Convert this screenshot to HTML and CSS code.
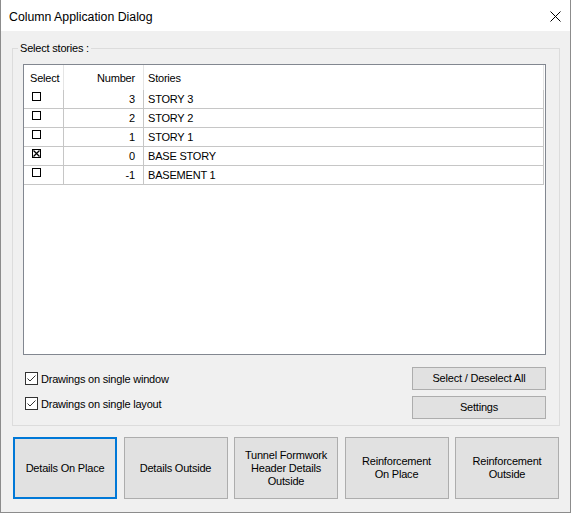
FILE: index.html
```html
<!DOCTYPE html>
<html lang="en">
<head>
    <meta charset="UTF-8">
    <meta name="viewport" content="width=device-width, initial-scale=1.0">
    <title>Column Application Dialog</title>
    <link rel="stylesheet" href="styles.css">
</head>
<body>
    <div class="window">
        <div class="titlebar">
            <span class="title">Column Application Dialog</span>
            <svg class="close" width="11" height="11" viewBox="0 0 11 11">
                <path d="M0.5 0.5 L10.5 10.5 M10.5 0.5 L0.5 10.5" stroke="#000" stroke-width="1" fill="none"/>
            </svg>
        </div>

        <div class="content">
            <fieldset class="group">
                <legend>Select stories :</legend>

                <div class="listbox">
                    <div class="list-head">
                        <div class="col col-select">Select</div>
                        <div class="col col-number">Number</div>
                        <div class="col col-story">Stories</div>
                    </div>
                    <div class="list-row">
                        <div class="col col-select"><span class="mark"></span></div>
                        <div class="col col-number">3</div>
                        <div class="col col-story">STORY 3</div>
                    </div>
                    <div class="list-row">
                        <div class="col col-select"><span class="mark"></span></div>
                        <div class="col col-number">2</div>
                        <div class="col col-story">STORY 2</div>
                    </div>
                    <div class="list-row">
                        <div class="col col-select"><span class="mark"></span></div>
                        <div class="col col-number">1</div>
                        <div class="col col-story">STORY 1</div>
                    </div>
                    <div class="list-row">
                        <div class="col col-select">
                            <span class="mark marked">
                                <svg width="9" height="9" viewBox="0 0 9 9">
                                    <path d="M1.5 1.5 L7.5 7.5 M7.5 1.5 L1.5 7.5" stroke="#000" stroke-width="1.3" fill="none"/>
                                </svg>
                            </span>
                        </div>
                        <div class="col col-number">0</div>
                        <div class="col col-story">BASE STORY</div>
                    </div>
                    <div class="list-row">
                        <div class="col col-select"><span class="mark"></span></div>
                        <div class="col col-number">-1</div>
                        <div class="col col-story">BASEMENT 1</div>
                    </div>
                </div>

                <div class="options">
                    <div class="checks">
                        <label class="check">
                            <span class="box">
                                <svg width="11" height="11" viewBox="0 0 11 11">
                                    <path d="M1.5 5.5 L4 8 L9.5 2.5" stroke="#333" stroke-width="1" fill="none"/>
                                </svg>
                            </span>
                            Drawings on single window
                        </label>
                        <label class="check">
                            <span class="box">
                                <svg width="11" height="11" viewBox="0 0 11 11">
                                    <path d="M1.5 5.5 L4 8 L9.5 2.5" stroke="#333" stroke-width="1" fill="none"/>
                                </svg>
                            </span>
                            Drawings on single layout
                        </label>
                    </div>
                    <div class="side-buttons">
                        <button class="btn">Select / Deselect All</button>
                        <button class="btn">Settings</button>
                    </div>
                </div>
            </fieldset>

            <div class="actions">
                <button class="action default">Details On Place</button>
                <button class="action">Details Outside</button>
                <button class="action">Tunnel Formwork<br>Header Details<br>Outside</button>
                <button class="action">Reinforcement<br>On Place</button>
                <button class="action">Reinforcement<br>Outside</button>
            </div>
        </div>
    </div>
</body>
</html>
```

FILE: styles.css
```css
* {
    margin: 0;
    padding: 0;
    box-sizing: border-box;
}

body {
    font-family: 'Segoe UI', 'Liberation Sans', Arial, sans-serif;
    font-size: 11px;
    letter-spacing: -0.2px;
    color: #000;
    background: #f0f0f0;
}

.window {
    width: 571px;
    height: 513px;
    border: 1px solid #8c8c8c;
    border-top: none;
    background: #f0f0f0;
    display: flex;
    flex-direction: column;
}

.titlebar {
    height: 31px;
    background: #fff;
    display: flex;
    align-items: center;
    justify-content: space-between;
    padding: 2px 9px 0 8px;
}

.title {
    font-size: 12.3px;
    letter-spacing: 0;
}

.close {
    display: block;
}

.content {
    flex: 1;
    padding: 9px 0 0 11px;
}

/* group box */
.group {
    width: 548px;
    border: 1px solid #dcdcdc;
    padding: 0 13px 6px 10px;
}

.group legend {
    line-height: 16px;
    padding: 0 2px;
    margin-left: -5px;
}

.listbox {
    margin-top: 8px;
    height: 291px;
    border: 1px solid #828790;
    background: #fff;
}

.list-head,
.list-row {
    display: flex;
}

.list-head {
    height: 25px;
}

.list-row {
    height: 19px;
    border-bottom: 1px solid #c6c6c6;
    width: 520px;
}

.col {
    display: flex;
    align-items: center;
    white-space: nowrap;
}

.list-row .col {
    padding-bottom: 1px;
}

.list-head .col {
    border-right: 1px solid #e5e5e5;
}

.list-row .col {
    border-right: 1px solid #c6c6c6;
}

.col-select {
    width: 40px;
    padding-left: 6px;
}

.col-number {
    width: 80px;
    justify-content: flex-end;
    padding-right: 8px;
}

.col-story {
    width: 400px;
    padding-left: 4px;
}

.list-row .col-select {
    align-items: flex-start;
    padding: 2px 0 0 8px;
}

.mark {
    width: 9px;
    height: 9px;
    border: 1px solid #000;
    display: block;
    position: relative;
}

.mark svg {
    position: absolute;
    left: -1px;
    top: -1px;
}

/* options */
.options {
    margin-top: 12px;
    display: flex;
    justify-content: space-between;
}

.checks {
    padding: 5px 0 0 2px;
    display: flex;
    flex-direction: column;
    gap: 12px;
}

.check {
    display: flex;
    align-items: center;
    gap: 3px;
    height: 13px;
}

.box {
    width: 13px;
    height: 13px;
    border: 1px solid #333;
    background: #fff;
    display: block;
}

.box svg {
    display: block;
}

.side-buttons {
    display: flex;
    flex-direction: column;
    gap: 6px;
}

.btn,
.action {
    font-family: inherit;
    font-size: 11px;
    letter-spacing: -0.2px;
    color: #000;
    background: #e1e1e1;
    border: 1px solid #adadad;
}

.btn {
    width: 134px;
    height: 23px;
    padding-bottom: 1px;
}

/* bottom actions */
.actions {
    margin: 11px 0 0 1px;
    width: 546px;
    display: flex;
    justify-content: space-between;
}

.action {
    width: 104px;
    height: 62px;
    line-height: 13px;
}

.action.default {
    border: 2px solid #0078d7;
}
```
